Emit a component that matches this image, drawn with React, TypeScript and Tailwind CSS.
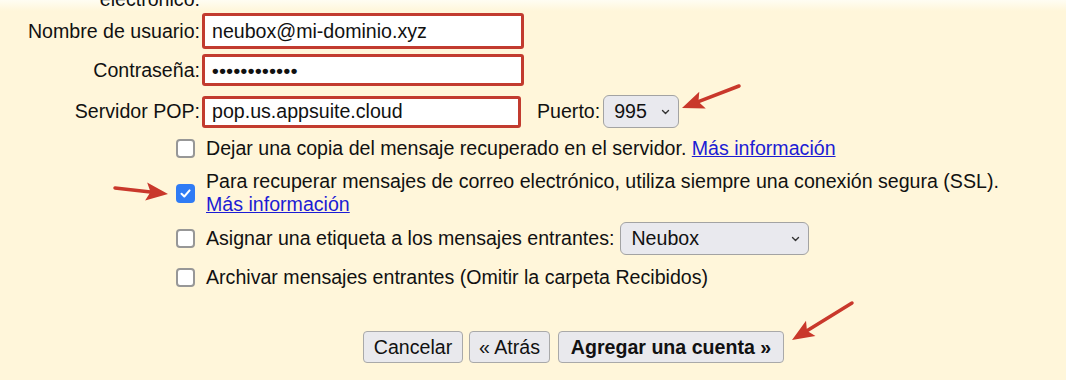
import React from 'react';

type Pt = [number, number];

function Arrow({ from, to, head = 21, width = 17 }: { from: Pt; to: Pt; head?: number; width?: number }) {
  const dx = to[0] - from[0];
  const dy = to[1] - from[1];
  const len = Math.hypot(dx, dy);
  const ux = dx / len;
  const uy = dy / len;
  const bx = to[0] - ux * head;
  const by = to[1] - uy * head;
  const nx = -uy * (width / 2);
  const ny = ux * (width / 2);
  const notchX = to[0] - ux * head * 0.8;
  const notchY = to[1] - uy * head * 0.8;
  const pts = `${to[0]},${to[1]} ${bx + nx},${by + ny} ${notchX},${notchY} ${bx - nx},${by - ny}`;
  return (
    <g>
      <line x1={from[0]} y1={from[1]} x2={notchX} y2={notchY} stroke="#c9382b" strokeWidth={3.5} strokeLinecap="round" />
      <polygon points={pts} fill="#c9382b" />
    </g>
  );
}

function Checkbox({ checked = false }: { checked?: boolean }) {
  if (checked) {
    return (
      <div className="w-[19px] h-[19px] rounded-[4px] bg-[#2f7bf5] flex items-center justify-center shrink-0">
        <svg width="13" height="13" viewBox="0 0 13 13">
          <path d="M2.5 6.8 L5.3 9.5 L10.6 3.4" fill="none" stroke="#fff" strokeWidth="2" strokeLinecap="round" strokeLinejoin="round" />
        </svg>
      </div>
    );
  }
  return <div className="w-[19px] h-[19px] rounded-[4px] border-2 border-[#979797] bg-white shrink-0" />;
}

function Chevron() {
  return (
    <svg width="9" height="6" viewBox="0 0 9 6" className="shrink-0">
      <path d="M1.5 1.5 L4.5 4.5 L7.5 1.5" fill="none" stroke="#333" strokeWidth="1.4" strokeLinecap="round" strokeLinejoin="round" />
    </svg>
  );
}

function RedField({ value, width, height }: { value: React.ReactNode; width: string; height: string }) {
  return (
    <div className={`${width} ${height} ml-[2px] border-[3px] border-[#c23b2f] rounded-[3px] bg-white flex items-center pl-[7px]`}>
      {value}
    </div>
  );
}

export default function App() {
  return (
    <div className="relative w-[1066px] h-[380px] overflow-hidden bg-[#fff6da] text-[19.6px] leading-[23px] text-[#111] font-['Liberation_Sans',Arial,sans-serif]">
      {/* cut-off previous label */}
      <div className="h-[11px] overflow-hidden bg-linear-to-b from-[#fffdf3] to-[#fff6da]">
        <div className="w-[200px] text-right mt-[-12px]">electrónico:</div>
      </div>

      <div className="flex items-center mt-[2px]">
        <div className="w-[200px] text-right">Nombre de usuario:</div>
        <RedField width="w-[322px]" height="h-[36px]" value="neubox@mi-dominio.xyz" />
      </div>

      <div className="flex items-center mt-[5px]">
        <div className="w-[200px] text-right">Contraseña:</div>
        <RedField
          width="w-[322px]"
          height="h-[32px]"
          value={<span className="tracking-[0.5px] text-[19px] font-bold">••••••••••••</span>}
        />
      </div>

      <div className="flex items-center mt-[9px]">
        <div className="w-[200px] text-right">Servidor POP:</div>
        <RedField width="w-[319px]" height="h-[32px]" value="pop.us.appsuite.cloud" />
        <div className="ml-[16px]">Puerto:</div>
        <div className="ml-[3px] w-[76px] h-[33px] rounded-[6px] border border-[#a3a3a3] bg-[#e9e9ee] flex items-center justify-between pl-[10px] pr-[8px]">
          <span>995</span>
          <Chevron />
        </div>
      </div>

      <div className="pl-[176px] flex flex-col">
        <div className="flex items-center mt-[9px] h-[23px]">
          <Checkbox />
          <div className="ml-[11px]">
            Dejar una copia del mensaje recuperado en el servidor.{' '}
            <a className="text-[#1c1cd4] underline">Más información</a>
          </div>
        </div>

        <div className="flex items-center mt-[10px]">
          <Checkbox checked />
          <div className="ml-[11px]">
            <div>Para recuperar mensajes de correo electrónico, utiliza siempre una conexión segura (SSL).</div>
            <a className="text-[#1c1cd4] underline">Más información</a>
          </div>
        </div>

        <div className="flex items-center mt-[6px]">
          <Checkbox />
          <div className="ml-[11px]">Asignar una etiqueta a los mensajes entrantes:</div>
          <div className="ml-[6px] w-[189px] h-[33px] rounded-[6px] border border-[#a3a3a3] bg-[#e9e9ee] flex items-center justify-between pl-[10px] pr-[8px]">
            <span>Neubox</span>
            <Chevron />
          </div>
        </div>

        <div className="flex items-center mt-[11px] h-[23px]">
          <Checkbox />
          <div className="ml-[11px]">Archivar mensajes entrantes (Omitir la carpeta Recibidos)</div>
        </div>
      </div>

      <div className="flex items-center pl-[363px] mt-[42px]">
        <button className="w-[100px] h-[32px] rounded-[4px] border border-[#a9a9a9] bg-[#e9e9ed]">Cancelar</button>
        <button className="ml-[6px] w-[81px] h-[32px] rounded-[4px] border border-[#a9a9a9] bg-[#e9e9ed]">« Atrás</button>
        <button className="ml-[8px] w-[226px] h-[32px] rounded-[4px] border border-[#a9a9a9] bg-[#e9e9ed] font-bold">
          Agregar una cuenta »
        </button>
      </div>

      {/* annotation arrows */}
      <svg className="absolute inset-0 pointer-events-none" width="1066" height="380">
        <Arrow from={[739, 86]} to={[682, 108]} head={22} width={18} />
        <Arrow from={[115, 188]} to={[168, 194]} head={22} width={18} />
        <Arrow from={[852, 303]} to={[792, 340]} head={22} width={18} />
      </svg>
    </div>
  );
}
